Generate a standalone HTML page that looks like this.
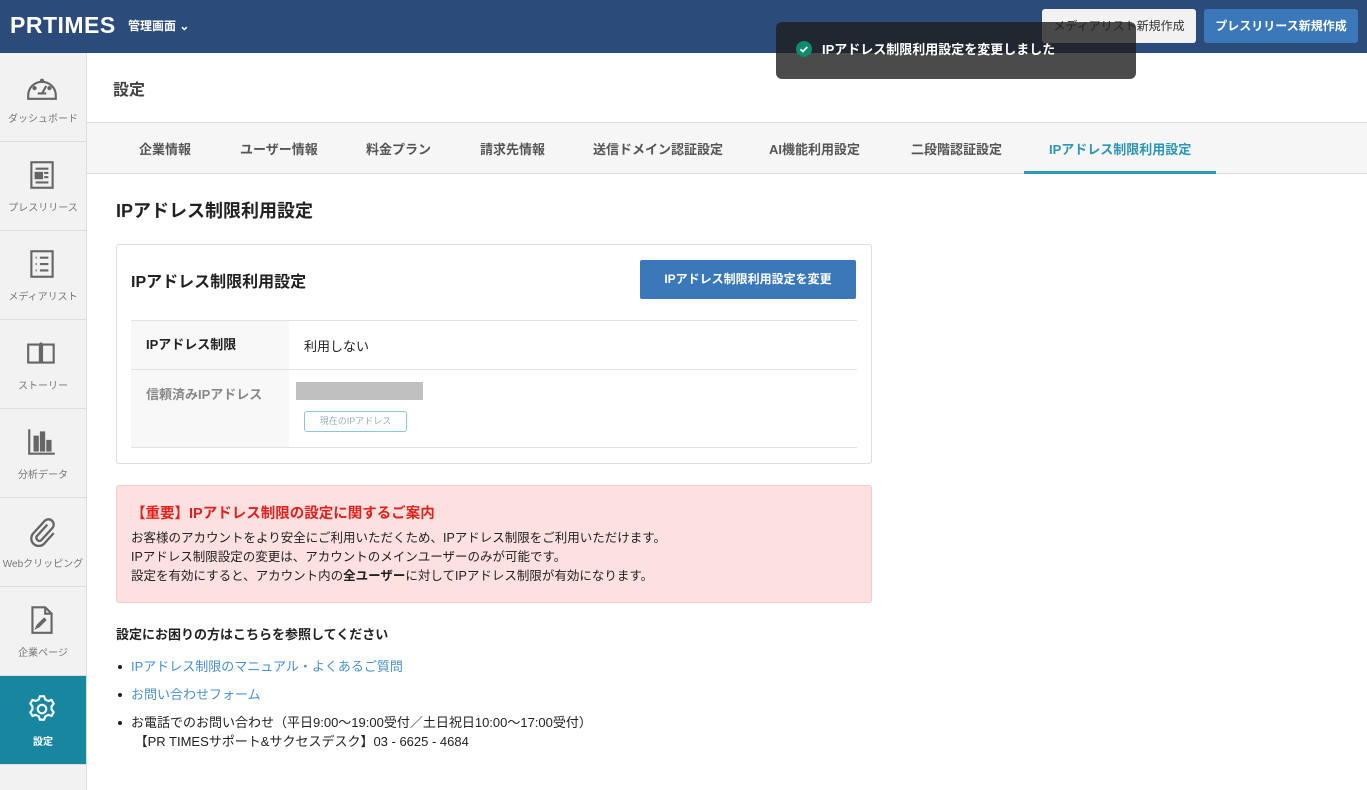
<!DOCTYPE html>
<html><head><meta charset="utf-8">
<style>
*{box-sizing:border-box;margin:0;padding:0}
body{width:1367px;height:790px;overflow:hidden;font-family:"Liberation Sans","Noto Sans CJK JP",sans-serif;background:#fff;color:#222;position:relative}
.hd{position:absolute;left:0;top:0;width:1367px;height:53px;background:#2b4c7a}
.logo{position:absolute;left:10px;top:12px;color:#fff;font-weight:bold;font-size:23px;letter-spacing:0.5px;font-family:"Liberation Sans",sans-serif}
.kanri{position:absolute;left:128px;top:17px;color:#fff;font-size:12px;font-weight:bold}
.b1{position:absolute;left:1042px;top:9px;width:154px;height:34px;background:#f2f2f2;border-radius:3px;font-size:12px;color:#333;text-align:center;line-height:34px}
.b2{position:absolute;left:1204px;top:9px;width:154px;height:34px;background:#3a78b9;border-radius:3px;font-size:12px;color:#fff;font-weight:bold;text-align:center;line-height:34px}
.toast{position:absolute;left:776px;top:22px;width:360px;height:57px;background:rgba(30,30,30,.8);border-radius:6px;color:#fff;font-size:13px;font-weight:bold}
.toast .ck{position:absolute;left:20px;top:19px;width:16px;height:16px;border-radius:50%;background:#0e8a6c}
.toast span{position:absolute;left:46px;top:17px}
.side{position:absolute;left:0;top:53px;width:87px;height:737px;background:#f2f2f2;border-right:1px solid #ddd}
.it{height:89px;border-bottom:1px solid #ddd;text-align:center;font-size:10px;color:#777;position:relative}
.it svg{position:absolute;left:25px;top:17px}
.it .l{position:absolute;left:0;right:0;top:57px}
.it.act{background:#17869f;color:#fff;font-weight:bold}
.ttl{position:absolute;left:113px;top:76px;font-size:16px;font-weight:bold;color:#444}
.tabs{position:absolute;left:87px;top:122px;width:1280px;height:52px;background:#f6f6f6;border-top:1px solid #ddd;border-bottom:1px solid #ddd}
.tab{position:absolute;top:16px;font-size:13px;color:#555;font-weight:bold}
.h2{position:absolute;left:116px;top:197px;font-size:18px;font-weight:bold}
.card{position:absolute;left:116px;top:244px;width:756px;height:220px;border:1px solid #ddd;border-radius:3px}
.ch{position:absolute;left:14px;top:23px;font-size:16px;font-weight:bold}
.cb{position:absolute;left:523px;top:15px;width:216px;height:39px;background:#3a78b9;border-radius:2px;color:#fff;font-size:12px;font-weight:bold;text-align:center;line-height:39px}
.r{position:absolute;left:14px;width:726px;border-top:1px solid #e2e2e2}
.lc{position:absolute;left:0;top:0;width:158px;background:#f8f8f8;font-size:13px;font-weight:bold;padding-left:15px}
.pink{position:absolute;left:116px;top:485px;width:756px;height:118px;background:#fde0e0;border:1px solid #f0cccc;border-radius:3px}
.pink .t{position:absolute;left:14px;top:16px;color:#e2211c;font-size:14.5px;font-weight:bold}
.pink .p{position:absolute;left:14px;top:43px;font-size:12.5px;line-height:19px;color:#222}
.help{position:absolute;left:116px;top:624px;font-size:13px;font-weight:bold}
ul{position:absolute;left:116px;top:657px;list-style:none;font-size:13px}
li{position:relative;padding-left:15px;margin-bottom:9px;line-height:19px}
li:before{content:"";position:absolute;left:2px;top:8px;width:4px;height:4px;border-radius:50%;background:#222}
a{color:#4a90d0;text-decoration:none}
</style></head><body>
<div class="hd"><div class="logo">PRTIMES</div><div class="kanri">管理画面 ⌄</div>
<div class="b1">メディアリスト新規作成</div><div class="b2">プレスリリース新規作成</div></div>
<div class="toast"><div class="ck"><svg width="16" height="16"><path d="M4.5 8.3l2.3 2.2 4.5-4.5" stroke="#fff" stroke-width="1.8" fill="none"/></svg></div><span>IPアドレス制限利用設定を変更しました</span></div>
<div class="side">
<div class="it"><svg width="34" height="32" viewBox="0 0 32 30" fill="none" stroke="#666" stroke-width="2"><path d="M3 24a13 13 0 1 1 26 0v3H3z"/><circle cx="9" cy="17" r="1" fill="#666"/><circle cx="23" cy="17" r="1" fill="#666"/><circle cx="16" cy="10" r="1" fill="#666"/><path d="M12 22h8M16 22l4-7"/></svg><div class="l">ダッシュボード</div></div>
<div class="it"><svg width="34" height="32" viewBox="0 0 32 30" fill="none" stroke="#666" stroke-width="2"><rect x="6" y="3" width="20" height="24"/><rect x="10" y="13" width="6" height="5" fill="#666"/><path d="M10 9h12M18 13h4M18 17h4M10 22h12"/></svg><div class="l">プレスリリース</div></div>
<div class="it"><svg width="34" height="32" viewBox="0 0 32 30" fill="none" stroke="#666" stroke-width="2"><rect x="6" y="3" width="20" height="24"/><path d="M10 9h1M10 15h1M10 21h1M14 9h8M14 15h8M14 21h8"/></svg><div class="l">メディアリスト</div></div>
<div class="it"><svg width="34" height="32" viewBox="0 0 32 30" fill="none" stroke="#666" stroke-width="2"><path d="M3 7h11v17H3zM16 7h11v17H16zM14 7q1 -2 2 0"/></svg><div class="l">ストーリー</div></div>
<div class="it"><svg width="34" height="32" viewBox="0 0 32 30" fill="none" stroke="#666" stroke-width="2"><path d="M4 3v23h24"/><rect x="9" y="10" width="3" height="13" fill="#666"/><rect x="15" y="6" width="3" height="17" fill="#666"/><rect x="21" y="14" width="3" height="9" fill="#666"/></svg><div class="l">分析データ</div></div>
<div class="it"><svg width="34" height="32" viewBox="0 0 32 30" fill="none" stroke="#666" stroke-width="2.2"><path d="M21 9l-10 11a3 3 0 0 0 4 4l11-12a5 5 0 0 0-7-7l-11 12a7 7 0 0 0 10 10l9-10"/></svg><div class="l">Webクリッピング</div></div>
<div class="it"><svg width="34" height="32" viewBox="0 0 32 30" fill="none" stroke="#666" stroke-width="2"><path d="M7 3h12l6 6v18H7zM19 3v6h6"/><path d="M11 22l2-1 6-6-1-1-6 6z" fill="#666"/></svg><div class="l">企業ページ</div></div>
<div class="it act"><svg width="34" height="32" viewBox="0 0 32 30" fill="none" stroke="#fff" stroke-width="2"><path d="M14 3h4l1 3 3 1.5 3-1 2 3.5-2 2.5v3l2 2.5-2 3.5-3-1-3 1.5-1 3h-4l-1-3-3-1.5-3 1-2-3.5 2-2.5v-3l-2-2.5 2-3.5 3 1 3-1.5z"/><circle cx="16" cy="15" r="4"/></svg><div class="l">設定</div></div>
</div>
<div class="ttl">設定</div>
<div class="tabs">
<div class="tab" style="left:52px">企業情報</div>
<div class="tab" style="left:153px">ユーザー情報</div>
<div class="tab" style="left:279px">料金プラン</div>
<div class="tab" style="left:393px">請求先情報</div>
<div class="tab" style="left:506px">送信ドメイン認証設定</div>
<div class="tab" style="left:682px">AI機能利用設定</div>
<div class="tab" style="left:824px">二段階認証設定</div>
<div class="tab" style="left:962px;color:#2a95b5">IPアドレス制限利用設定</div>
<div style="position:absolute;left:937px;top:48px;width:192px;height:3px;background:#2a9bb8"></div>
</div>
<div class="h2">IPアドレス制限利用設定</div>
<div class="card">
<div class="ch">IPアドレス制限利用設定</div>
<div class="cb">IPアドレス制限利用設定を変更</div>
<div class="r" style="top:75px;height:49px"><div class="lc" style="height:48px;line-height:48px">IPアドレス制限</div><div style="position:absolute;left:173px;top:15px;font-size:13px">利用しない</div></div>
<div class="r" style="top:124px;height:79px;border-bottom:1px solid #e2e2e2"><div class="lc" style="height:77px;padding-top:14px;color:#888">信頼済みIPアドレス</div>
<div style="position:absolute;left:165px;top:12px;width:127px;height:18px;background:#c0c0c0"></div>
<div style="position:absolute;left:173px;top:41px;width:103px;height:21px;border:1px solid #8cc6d6;border-radius:3px;font-size:9px;color:#9ab;text-align:center;line-height:19px">現在のIPアドレス</div></div>
</div>
<div class="pink"><div class="t">【重要】IPアドレス制限の設定に関するご案内</div>
<div class="p">お客様のアカウントをより安全にご利用いただくため、IPアドレス制限をご利用いただけます。<br>IPアドレス制限設定の変更は、アカウントのメインユーザーのみが可能です。<br>設定を有効にすると、アカウント内の<b>全ユーザー</b>に対してIPアドレス制限が有効になります。</div></div>
<div class="help">設定にお困りの方はこちらを参照してください</div>
<ul>
<li><a>IPアドレス制限のマニュアル・よくあるご質問</a></li>
<li><a>お問い合わせフォーム</a></li>
<li>お電話でのお問い合わせ（平日9:00～19:00受付／土日祝日10:00～17:00受付）<br>&nbsp;【PR TIMESサポート&amp;サクセスデスク】03 - 6625 - 4684</li>
</ul>
</body></html>
